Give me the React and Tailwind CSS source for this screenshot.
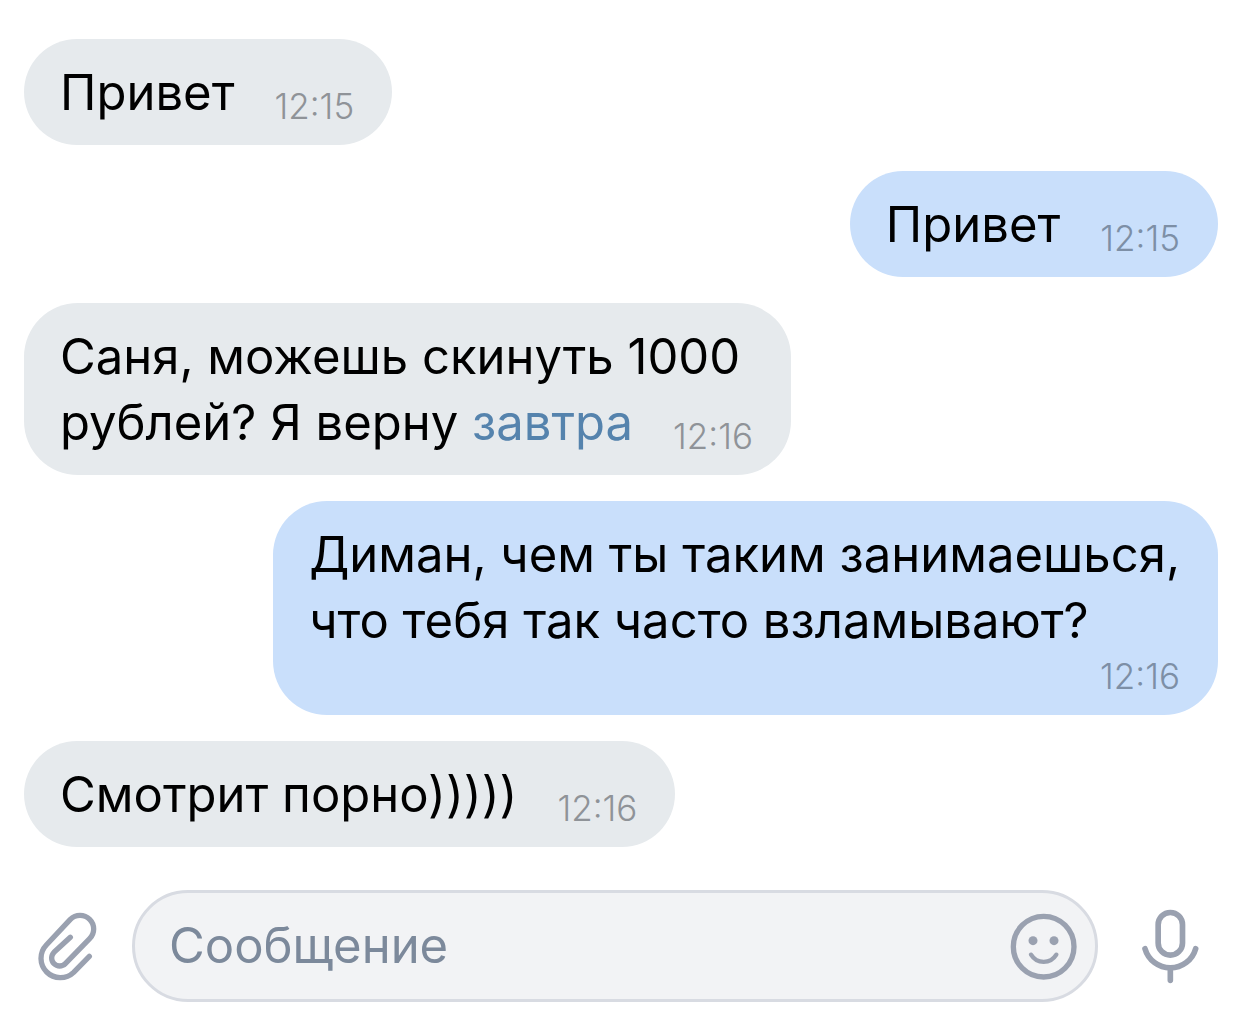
import React from "react";

function Bubble({ mine = false, below = false, time, children }) {
  return (
    <li className={mine ? "flex justify-end" : "flex justify-start"}>
      <div
        className={
          (mine ? "bg-[#c9dffb]" : "bg-[#e6eaed]") +
          " rounded-[54px] pt-[21px] pr-[38px] pb-[19px] pl-9"
        }
      >
        <p className="text-[49px] leading-[66px] text-black">
          {children}
          <time
            className={
              (mine ? "text-[#7d8fa6] " : "text-[#8f9398] ") +
              (below ? "mt-0.5 block text-right " : "ml-10 inline-block align-bottom ") +
              "text-[35px] leading-[40px] font-light"
            }
          >
            {time}
          </time>
        </p>
      </div>
    </li>
  );
}

function ClipIcon() {
  return (
    <svg className="h-[69px] w-[61px]" viewBox="110 124 183 207" fill="none" stroke="currentColor" strokeWidth="16" strokeLinecap="round" strokeLinejoin="round" aria-hidden="true">
      <path d="M270 257L223 305A58 58 0 0 1 141 223L213 146A41 41 0 0 1 271 204L198 279A24 24 0 0 1 164 245L213 200" />
    </svg>
  );
}

function SmileIcon() {
  return (
    <svg className="size-[67px]" viewBox="91 130 201 201" fill="none" stroke="currentColor" strokeLinecap="round" aria-hidden="true">
      <circle cx="192" cy="231" r="91" strokeWidth="16" />
      <circle cx="160" cy="213" r="13.5" fill="currentColor" stroke="none" />
      <circle cx="223" cy="213" r="13.5" fill="currentColor" stroke="none" />
      <path d="M154 255C172 284 212 284 230 255" strokeWidth="13" />
    </svg>
  );
}

function MicIcon() {
  return (
    <svg className="h-[75px] w-[57px]" viewBox="485 120 171 225" fill="none" stroke="currentColor" strokeWidth="17" strokeLinecap="round" aria-hidden="true">
      <rect x="533.5" y="130.5" width="73" height="128" rx="36.5" />
      <path d="M494 239A79 79 0 0 0 646 239M570 298V334" />
    </svg>
  );
}

export default function App() {
  return (
    <main className="flex min-h-screen flex-col bg-white font-['Inter','Liberation_Sans',sans-serif]">
      <ul className="flex flex-col gap-[26px] px-6 pt-[39px]">
        <Bubble time="12:15">Привет</Bubble>
        <Bubble mine time="12:15">Привет</Bubble>
        <Bubble time="12:16">
          Саня, можешь скинуть 1000
          <br />
          рублей? Я верну <a href="#" className="text-[#5583ad]">завтра</a>
        </Bubble>
        <Bubble mine below time="12:16">
          Диман, чем ты таким занимаешься,
          <br />
          что тебя так часто взламывают?
        </Bubble>
        <Bubble time="12:16">Смотрит порно)))))</Bubble>
      </ul>
      <form className="mt-[43px] flex items-center pr-[43px] pb-4 pl-9 text-[#9aa1b0]">
        <button type="button" aria-label="Прикрепить" className="shrink-0">
          <ClipIcon />
        </button>
        <div className="mr-11 ml-[35px] flex h-28 min-w-0 flex-1 items-center rounded-full border-[3px] border-[#d8dbe2] bg-[#f2f3f5] pr-[18px] pl-[34px]">
          <input
            type="text"
            aria-label="Сообщение"
            placeholder="Сообщение"
            className="min-w-0 flex-1 bg-transparent text-[49px] leading-[66px] text-black outline-none placeholder:text-[#7c899b]"
          />
          <button type="button" aria-label="Смайлы" className="shrink-0">
            <SmileIcon />
          </button>
        </div>
        <button type="button" aria-label="Голосовое сообщение" className="shrink-0">
          <MicIcon />
        </button>
      </form>
    </main>
  );
}
